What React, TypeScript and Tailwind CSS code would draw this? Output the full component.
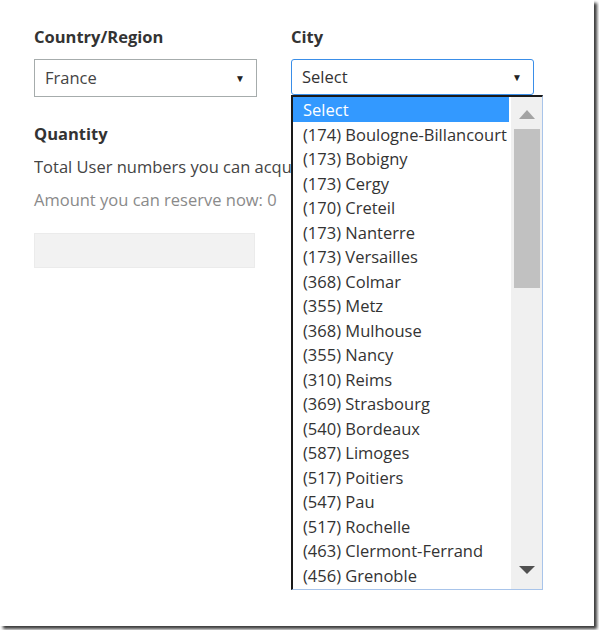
export default function App() {
  const cities = [
    '(174) Boulogne-Billancourt',
    '(173) Bobigny',
    '(173) Cergy',
    '(170) Creteil',
    '(173) Nanterre',
    '(173) Versailles',
    '(368) Colmar',
    '(355) Metz',
    '(368) Mulhouse',
    '(355) Nancy',
    '(310) Reims',
    '(369) Strasbourg',
    '(540) Bordeaux',
    '(587) Limoges',
    '(517) Poitiers',
    '(547) Pau',
    '(517) Rochelle',
    '(463) Clermont-Ferrand',
    '(456) Grenoble',
  ]

  return (
    <div className="w-[599px] h-[630px] bg-white overflow-hidden font-['Open_Sans',sans-serif]">
      <div className="relative w-[594px] h-[626px] bg-white shadow-[3px_3px_3px_#3a3a3a]">
        <div className="flex pl-[34px] pt-[27px]">
          {/* Left column */}
          <div className="w-[223px] flex flex-col">
            <div className="h-5 leading-5 text-[16.5px] font-bold text-[#333]">Country/Region</div>
            <div className="mt-3 h-[38px] border border-[#a6acac] flex items-center justify-between pl-[10px] pr-[11px]">
              <span className="text-[16.5px] text-[#444]">France</span>
              <span className="text-[10px] text-[#222]">▼</span>
            </div>
            <div className="mt-[27px] h-5 leading-5 text-[16.5px] font-bold text-[#333]">Quantity</div>
            {/* clipped where the open list covers it */}
            <div className="mt-[13px] w-[257px] h-5 leading-5 text-[16.5px] text-[#444] whitespace-nowrap overflow-hidden">
              Total User numbers you can acquire: 0
            </div>
            <div className="mt-[13px] h-5 leading-5 text-[16.5px] text-[#8a8a8a] whitespace-nowrap">
              Amount you can reserve now: 0
            </div>
            <div className="mt-[23px] w-[221px] h-[35px] bg-[#f2f2f2] border border-[#ebebeb]" />
          </div>

          {/* Right column */}
          <div className="ml-[34px] w-[243px] flex flex-col">
            <div className="h-5 leading-5 text-[16.5px] font-bold text-[#333]">City</div>
            <div className="mt-3 h-[36px] border border-[#3a8ee8] rounded-[3px] flex items-center justify-between pl-[10px] pr-[11px] bg-white">
              <span className="text-[16.5px] text-[#333]">Select</span>
              <span className="text-[10px] text-[#222]">▼</span>
            </div>
          </div>
        </div>

        {/* Open dropdown list */}
        <div className="absolute left-[291px] top-[95px] w-[252px] h-[495px] bg-white border-t-2 border-l-2 border-t-[#1a1a1a] border-l-[#1a1a1a] border-r border-b border-r-[#a8c4ea] border-b-[#a8c4ea] flex">
          <div className="flex-1 flex flex-col overflow-hidden">
            <div className="h-[24.5px] leading-[26px] bg-[#3399ff] text-white text-[16.5px] pl-[10px] mr-[2px]">Select</div>
            {cities.map((c) => (
              <div key={c} className="h-[24.5px] leading-[26px] text-[16.5px] text-[#333] pl-[10px] whitespace-nowrap">
                {c}
              </div>
            ))}
          </div>
          <div className="w-[31px] bg-[#f0f0f0] flex flex-col items-center">
            <svg className="mt-[13px]" width="16" height="9" viewBox="0 0 16 9">
              <polygon points="8,0 16,9 0,9" fill="#a3a3a3" />
            </svg>
            <div className="mt-[10px] w-[26px] h-[159px] bg-[#c1c1c1]" />
            <div className="flex-1" />
            <svg className="mb-[15px]" width="16" height="8" viewBox="0 0 16 8">
              <polygon points="0,0 16,0 8,8" fill="#505050" />
            </svg>
          </div>
        </div>
      </div>
    </div>
  )
}
